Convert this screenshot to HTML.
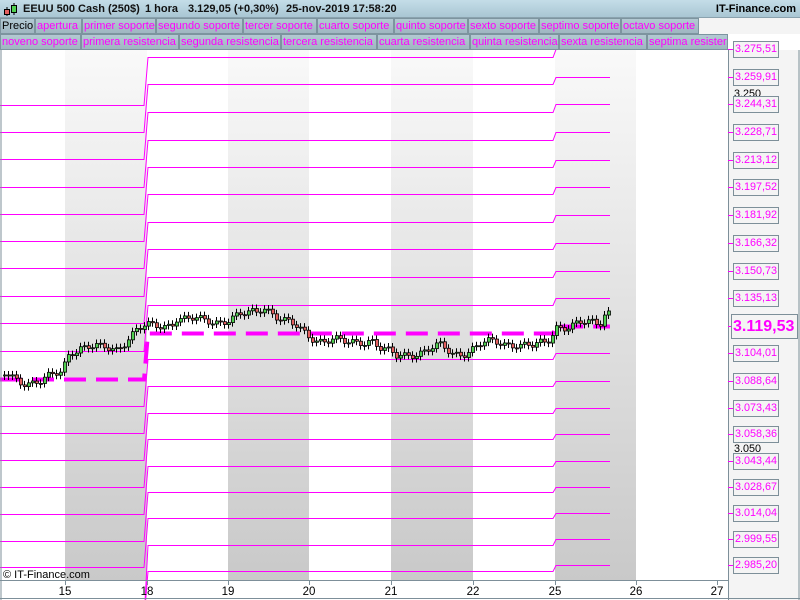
<!DOCTYPE html>
<html><head><meta charset="utf-8"><style>
*{margin:0;padding:0;box-sizing:border-box}
body{width:800px;height:600px;overflow:hidden;background:#fff;font-family:"Liberation Sans",sans-serif;position:relative}
#hdr{position:absolute;left:0;top:0;width:800px;height:18px;background:linear-gradient(#c4dde8,#a9c6d3);border-bottom:1px solid #8aa2ae}
#hdr span{position:absolute;top:3px;font-size:11px;font-weight:bold;color:#111;white-space:nowrap}
.row{position:absolute;left:0;height:16px;background:#f4f4f4}
.tab{position:absolute;top:0;height:16px;background:linear-gradient(#b3c9d3,#9fb6c1);border:1px solid #7d949f;font-size:11px;line-height:14px;color:#f0f;padding-left:1px;white-space:nowrap;overflow:hidden}
.lab{position:absolute;left:733px;width:46px;height:17px;border:1px solid #7d8f99;background:#f4f4f4;color:#f0f;font-size:10.8px;line-height:15px;padding-left:1px;white-space:nowrap}
.tick{position:absolute;left:728px;width:5px;height:1px;background:#f0f}
.ax{position:absolute;font-size:10.8px;color:#000}
</style></head><body>
<div id="hdr">
<svg style="position:absolute;left:3px;top:2px" width="14" height="15"><line x1="4" y1="5" x2="4" y2="14" stroke="#000"/><rect x="1.5" y="7.5" width="5" height="5" fill="#e56060" stroke="#000"/><line x1="11" y1="1" x2="11" y2="13" stroke="#000"/><rect x="8.5" y="3.5" width="5" height="7" fill="#50d050" stroke="#000"/></svg>
<span style="left:23px">EEUU 500 Cash (250$)</span><span style="left:145px">1 hora</span><span style="left:188px">3.129,05 (+0,30%)</span><span style="left:286px">25-nov-2019 17:58:20</span><span style="right:4px;color:#000">IT-Finance.com</span>
</div>
<div class="row" style="top:18px;width:800px">
<div class="tab" style="left:0;width:35px;color:#000">Precio</div>
<div class="tab" style="left:35px;width:47px">apertura</div>
<div class="tab" style="left:82px;width:74px">primer soporte</div>
<div class="tab" style="left:156px;width:87px">segundo soporte</div>
<div class="tab" style="left:243px;width:74px">tercer soporte</div>
<div class="tab" style="left:317px;width:77px">cuarto soporte</div>
<div class="tab" style="left:394px;width:74px">quinto soporte</div>
<div class="tab" style="left:468px;width:71px">sexto soporte</div>
<div class="tab" style="left:539px;width:82px">septimo soporte</div>
<div class="tab" style="left:621px;width:78px">octavo soporte</div>
</div>
<div class="row" style="top:34px;width:728px">
<div class="tab" style="left:0;width:81px">noveno soporte</div>
<div class="tab" style="left:81px;width:98px">primera resistencia</div>
<div class="tab" style="left:179px;width:102px">segunda resistencia</div>
<div class="tab" style="left:281px;width:96px">tercera resistencia</div>
<div class="tab" style="left:377px;width:93px">cuarta resistencia</div>
<div class="tab" style="left:470px;width:89px">quinta resistencia</div>
<div class="tab" style="left:559px;width:88px">sexta resistencia</div>
<div class="tab" style="left:647px;width:81px">septima resister</div>
</div>
<svg id="ch" style="position:absolute;left:0;top:50px" width="800" height="550" viewBox="0 50 800 550">
<defs><linearGradient id="g" x1="0" y1="0" x2="0" y2="1"><stop offset="0" stop-color="#f9f9f9"/><stop offset="1" stop-color="#c9c9c9"/></linearGradient></defs>
<rect x="65" y="50" width="82" height="530" fill="url(#g)"/>
<rect x="228" y="50" width="81" height="530" fill="url(#g)"/>
<rect x="391" y="50" width="82" height="530" fill="url(#g)"/>
<rect x="555" y="50" width="81" height="530" fill="url(#g)"/>
<rect x="728" y="50" width="72" height="550" fill="#f4f4f4"/>
<g id="lines" stroke="#f0f" fill="none" stroke-width="1"></g>
<g id="cand"></g>
<line x1="0" y1="580.5" x2="728" y2="580.5" stroke="#7d8f99"/>
<line x1="728.5" y1="50" x2="728.5" y2="600" stroke="#7d8f99"/>
<line x1="1" y1="50" x2="1" y2="600" stroke="#7d8f99"/>
<line x1="0" y1="598.5" x2="800" y2="598.5" stroke="#7d8f99"/>
<line x1="799" y1="50" x2="799" y2="600" stroke="#7d8f99"/>
<g stroke="#7d8f99"><line x1="65.5" y1="580" x2="65.5" y2="585"/><line x1="147.5" y1="580" x2="147.5" y2="585"/><line x1="228.5" y1="580" x2="228.5" y2="585"/><line x1="309.5" y1="580" x2="309.5" y2="585"/><line x1="391.5" y1="580" x2="391.5" y2="585"/><line x1="473.5" y1="580" x2="473.5" y2="585"/><line x1="555.5" y1="580" x2="555.5" y2="585"/><line x1="636.5" y1="580" x2="636.5" y2="585"/><line x1="717.5" y1="580" x2="717.5" y2="585"/></g>
<g font-family="Liberation Sans" font-size="11.5" text-anchor="middle" fill="#000"><text x="65" y="595">15</text><text x="147" y="595">18</text><text x="228" y="595">19</text><text x="309" y="595">20</text><text x="391" y="595">21</text><text x="473" y="595">22</text><text x="555" y="595">25</text><text x="636" y="595">26</text><text x="717" y="595">27</text></g>
<text x="3" y="578" font-family="Liberation Sans" font-size="11" fill="#000">© IT-Finance.com</text>
</svg>
<div class="ax" style="left:734px;top:88px">3.250</div>
<div class="ax" style="left:734px;top:443px">3.050</div>
<div id="labs"></div>
<script>
var R=[49,77,104,132,160,187,215,243,271,298,326,353,381,408,434,461,487,513,539,565];
var M=[57,84,112,140,167,194,222,249,277,305,333,359,386,413,439,466,492,518,545,571];
var L=[105,132,159,187,214,241,268,296,323,351,379,406,433,460,487,514,541,567];
var V=["3.275,51","3.259,91","3.244,31","3.228,71","3.213,12","3.197,52","3.181,92","3.166,32","3.150,73","3.135,13","3.119,53","3.104,01","3.088,64","3.073,43","3.058,36","3.043,44","3.028,67","3.014,04","2.999,55","2.985,20"];
var s='';
for(var i=0;i<20;i++){
 var d=(i==10)?' stroke-width="4" stroke-dasharray="22,10"':'';
 var ly=L[i]!==undefined?L[i]:620;
 s+='<polyline points="0,'+(ly+.5)+' 144,'+(ly+.5)+' 148,'+(M[i]+.5)+' 553,'+(M[i]+.5)+' 556,'+(R[i]+.5)+' 610,'+(R[i]+.5)+'"'+d+'/>';
}
document.getElementById('lines').innerHTML=s;
var h='';
for(var i=0;i<20;i++){
 if(i==10){h+='<div class="tick" style="top:'+R[i]+'px"></div><div class="lab" style="left:731px;width:67px;top:'+(R[i]-12)+'px;height:25px;font-size:16px;font-weight:bold;line-height:23px">'+V[i]+'</div>';}
 else h+='<div class="tick" style="top:'+R[i]+'px"></div><div class="lab" style="top:'+(R[i]-8)+'px">'+V[i]+'</div>';
}
document.getElementById('labs').innerHTML=h;
var P=[[3,376],[20,380],[40,382],[50,378],[60,372],[68,350],[80,346],[100,350],[115,348],[125,338],[135,330],[145,328],[150,328],[160,326],[170,322],[175,316],[185,320],[200,322],[215,320],[230,318],[245,316],[255,312],[262,305],[270,310],[280,320],[290,326],[300,332],[315,338],[330,340],[345,345],[360,340],[370,338],[380,350],[395,358],[410,352],[425,350],[440,348],[450,354],[465,350],[480,345],[500,343],[515,342],[530,348],[545,344],[555,325],[580,325],[598,324],[603,312],[609,309]];
var c='',prev=P[0][1],k=0;
for(var x=3;x<=609;x+=4){
 while(k<P.length-2&&P[k+1][0]<x)k++;
 var a=P[k],b=P[k+1],t=(x-a[0])/(b[0]-a[0]);t=Math.max(0,Math.min(1,t));
 var y=a[1]+(b[1]-a[1])*t+Math.sin(x*1.7)*4+Math.sin(x*0.37)*3;
 var yt=Math.min(prev,y),hh=Math.max(1,Math.abs(y-prev));
 var col=y<prev?'#50d050':'#e56060';
 c+='<line x1="'+(x+1.5)+'" x2="'+(x+1.5)+'" y1="'+(yt-4)+'" y2="'+(yt+hh+4)+'" stroke="#000"/>';
 c+='<rect x="'+(x+0.5)+'" y="'+yt+'" width="3" height="'+hh+'" fill="'+col+'" stroke="#000" stroke-width="0.8"/>';
 prev=y;
}
document.getElementById('cand').innerHTML=c;
</script>
</body></html>
